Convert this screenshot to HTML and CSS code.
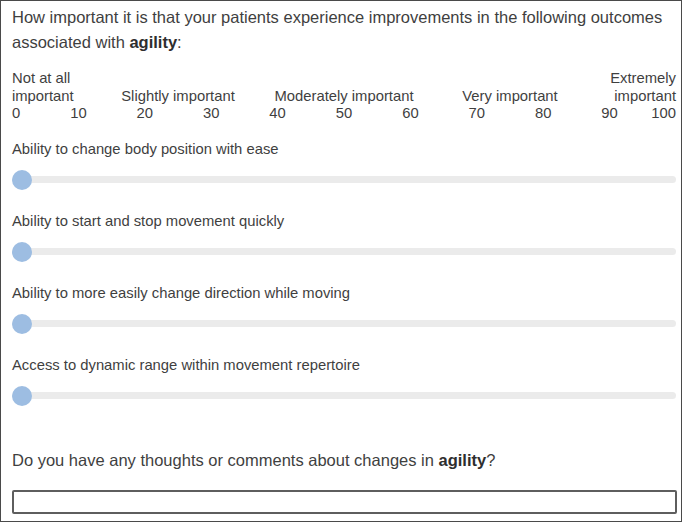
FILE: index.html
```html
<!DOCTYPE html>
<html lang="en">
<head>
  <meta charset="UTF-8">
  <title>Agility outcomes</title>
  <link rel="stylesheet" href="styles.css">
</head>
<body>
  <div class="panel">
    <p class="question">How important it is that your patients experience improvements in the following outcomes associated with <b>agility</b>:</p>

    <div class="scale">
      <div class="scale-labels">
        <span class="lbl first">Not at all<br>important</span>
        <span class="lbl">Slightly important</span>
        <span class="lbl">Moderately important</span>
        <span class="lbl">Very important</span>
        <span class="lbl last">Extremely<br>important</span>
      </div>
      <div class="scale-numbers">
        <span class="first">0</span>
        <span>10</span>
        <span>20</span>
        <span>30</span>
        <span>40</span>
        <span>50</span>
        <span>60</span>
        <span>70</span>
        <span>80</span>
        <span>90</span>
        <span class="last">100</span>
      </div>
    </div>

    <div class="item">
      <label class="item-label">Ability to change body position with ease</label>
      <input type="range" class="slider" min="0" max="100" value="0">
    </div>
    <div class="item">
      <label class="item-label">Ability to start and stop movement quickly</label>
      <input type="range" class="slider" min="0" max="100" value="0">
    </div>
    <div class="item">
      <label class="item-label">Ability to more easily change direction while moving</label>
      <input type="range" class="slider" min="0" max="100" value="0">
    </div>
    <div class="item">
      <label class="item-label">Access to dynamic range within movement repertoire</label>
      <input type="range" class="slider" min="0" max="100" value="0">
    </div>

    <p class="question comments-q">Do you have any thoughts or comments about changes in <b>agility</b>?</p>
    <input type="text" class="comments">
  </div>
</body>
</html>
```

FILE: styles.css
```css
/* Page */
body {
  margin: 0;
  background: #fff;
  font-family: "Liberation Sans", Arial, sans-serif;
  color: #3f3f3f;
}

/* Survey block */
.panel {
  width: 682px;
  height: 522px;
  box-sizing: border-box;
  border: 1px solid #4a4a4a;
  padding: 4px 5px 0 11px;
}

.question {
  margin: 0;
  font-size: 16.5px;
  line-height: 25px;
}
.question b {
  color: #2e2e2e;
}

/* Scale header */
.scale {
  margin-top: 15px;
  font-size: 14.8px;
  line-height: 17.5px;
}
.scale-labels {
  display: grid;
  grid-template-columns: 1fr 2fr 2fr 2fr 1fr;
  align-items: end;
}
.scale-numbers {
  display: grid;
  grid-template-columns: 1fr repeat(9, 2fr) 1fr;
}
.scale-labels span,
.scale-numbers span {
  text-align: center;
  white-space: nowrap;
}
.scale-labels .first,
.scale-numbers .first {
  text-align: left;
}
.scale-labels .last,
.scale-numbers .last {
  text-align: right;
}

/* Statement rows */
.item {
  display: flex;
  flex-direction: column;
  margin-top: 18px;
}
.item + .item {
  margin-top: 23px;
}
.item-label {
  font-size: 14.8px;
  line-height: 17px;
}

.slider {
  -webkit-appearance: none;
  appearance: none;
  width: 664px;
  height: 20px;
  margin: 12px 0 0;
  background: transparent;
}
.slider::-webkit-slider-runnable-track {
  height: 7px;
  background: #ebebeb;
  border-radius: 4px;
}
.slider::-webkit-slider-thumb {
  -webkit-appearance: none;
  width: 20px;
  height: 20px;
  margin-top: -6.5px;
  border-radius: 50%;
  background: #9dbde2;
  border: none;
}

.comments-q {
  margin-top: 42px;
}

.comments {
  display: block;
  width: 665px;
  height: 24px;
  box-sizing: border-box;
  margin-top: 17px;
  border: 2px solid #5e5e5e;
  border-radius: 2px;
  padding: 0 6px;
  font: inherit;
}
```
